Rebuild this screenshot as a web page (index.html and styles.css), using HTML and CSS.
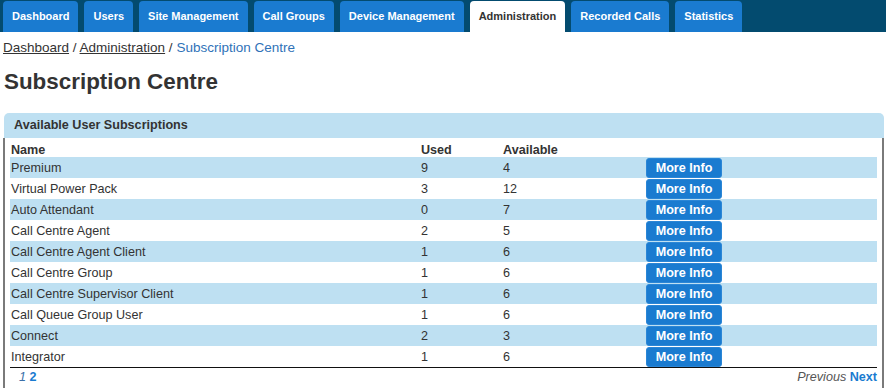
FILE: index.html
```html
<!DOCTYPE html>
<html>
    <head>
        <meta charset="utf-8">
        <title>Subscription Centre</title>
        <link rel="stylesheet" href="styles.css">
    </head>
    <body>
        <div class="topnav">
            <a class="tab" href="#">Dashboard</a>
            <a class="tab" href="#">Users</a>
            <a class="tab" href="#">Site Management</a>
            <a class="tab" href="#">Call Groups</a>
            <a class="tab" href="#">Device Management</a>
            <a class="tab active" href="#">Administration</a>
            <a class="tab" href="#">Recorded Calls</a>
            <a class="tab" href="#">Statistics</a>
        </div>

        <div class="page">
            <div class="crumbs">
                <a href="#">Dashboard</a> / <a href="#">Administration</a> / <span class="here">Subscription Centre</span>
            </div>

            <h1>Subscription Centre</h1>

            <div class="panel">
                <div class="panel-head">Available User Subscriptions</div>
                <div class="panel-body">
                    <table class="subs">
                        <tr>
                            <th class="c-name">Name</th>
                            <th class="c-used">Used</th>
                            <th class="c-avail">Available</th>
                            <th></th>
                        </tr>
                        <tr><td>Premium</td><td>9</td><td>4</td><td><button class="btn">More Info</button></td></tr>
                        <tr><td>Virtual Power Pack</td><td>3</td><td>12</td><td><button class="btn">More Info</button></td></tr>
                        <tr><td>Auto Attendant</td><td>0</td><td>7</td><td><button class="btn">More Info</button></td></tr>
                        <tr><td>Call Centre Agent</td><td>2</td><td>5</td><td><button class="btn">More Info</button></td></tr>
                        <tr><td>Call Centre Agent Client</td><td>1</td><td>6</td><td><button class="btn">More Info</button></td></tr>
                        <tr><td>Call Centre Group</td><td>1</td><td>6</td><td><button class="btn">More Info</button></td></tr>
                        <tr><td>Call Centre Supervisor Client</td><td>1</td><td>6</td><td><button class="btn">More Info</button></td></tr>
                        <tr><td>Call Queue Group User</td><td>1</td><td>6</td><td><button class="btn">More Info</button></td></tr>
                        <tr><td>Connect</td><td>2</td><td>3</td><td><button class="btn">More Info</button></td></tr>
                        <tr><td>Integrator</td><td>1</td><td>6</td><td><button class="btn">More Info</button></td></tr>
                    </table>
                    <div class="pager">
                        <div class="pages"><span class="cur">1</span> <a href="#">2</a></div>
                        <div class="prevnext"><span class="prev">Previous</span> <a href="#">Next</a></div>
                    </div>
                </div>
            </div>
        </div>
    </body>
</html>
```

FILE: styles.css
```css
body {
    margin: 0;
    font-family: "Liberation Sans", Arial, sans-serif;
    color: #333;
    background: #fff;
}

.topnav {
    display: flex;
    gap: 6px;
    height: 32px;
    padding: 1px 0 0 3px;
    box-sizing: border-box;
    background: #034b6f;
}
.tab {
    display: flex;
    align-items: center;
    padding: 0 9px 1px 9px;
    background: #1a7bd0;
    color: #fff;
    font-size: 11px;
    font-weight: bold;
    text-decoration: none;
    border-radius: 4px 4px 0 0;
}
.tab.active {
    background: #fff;
    color: #333;
}

.page {
    padding: 0 2px 0 3px;
}

.crumbs {
    margin-top: 8px;
    height: 16px;
    font-size: 13.5px;
    color: #333;
}
.crumbs a {
    color: #333;
}
.crumbs .here {
    color: #2f72b8;
}

h1 {
    margin: 13px 0 0 1px;
    height: 40px;
    font-size: 22.4px;
    color: #333;
}

.panel {
    margin-top: 4px;
}
.panel-head {
    margin-left: 1px;
    height: 25px;
    line-height: 25px;
    padding-left: 10px;
    background: #bee0f2;
    border-radius: 5px 5px 0 0;
    font-size: 12.6px;
    font-weight: bold;
}
.panel-body {
    border-left: 2px solid #7a7a7a;
    border-right: 2px solid #7a7a7a;
    padding: 0 5px;
    height: 260px;
}

table.subs {
    width: 100%;
    border-collapse: collapse;
    font-size: 12.6px;
}
.subs th {
    height: 19px;
    padding: 0 1px;
    text-align: left;
    vertical-align: bottom;
    line-height: 14px;
}
.subs td {
    height: 21px;
    padding: 0 1px;
    line-height: 14px;
}
.subs tr:nth-child(even) td {
    background: #bee0f2;
}
.c-name {
    width: 408px;
}
.c-used {
    width: 80px;
}
.c-avail {
    width: 141px;
}

.btn {
    display: block;
    width: 76px;
    height: 20px;
    padding: 0;
    border: 1px solid #2b86d6;
    border-radius: 3px;
    background: #1a7bd0;
    color: #fff;
    font-family: "Liberation Sans", Arial, sans-serif;
    font-size: 12.6px;
    font-weight: bold;
}

.pager {
    display: flex;
    justify-content: space-between;
    border-top: 1px solid #111;
    font-size: 12.6px;
    padding: 2px 0 0 9px;
}
.pager a {
    color: #1a7bd0;
    font-weight: bold;
    text-decoration: none;
}
.pager .cur {
    font-style: italic;
    color: #3c6fa8;
}
.pager .prev {
    font-style: italic;
    color: #555;
}
```
